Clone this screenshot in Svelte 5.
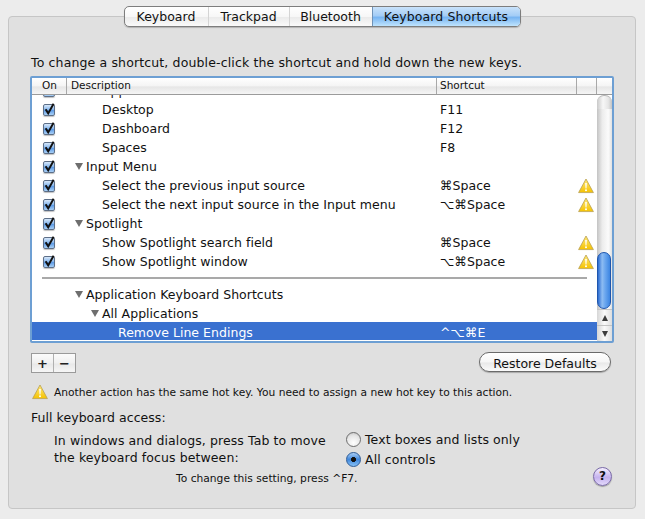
<script>
  const tabs = ['Keyboard', 'Trackpad', 'Bluetooth', 'Keyboard Shortcuts']

  const rows = [
    { label: 'Desktop', level: 2, on: true, key: 'F11' },
    { label: 'Dashboard', level: 2, on: true, key: 'F12' },
    { label: 'Spaces', level: 2, on: true, key: 'F8' },
    { label: 'Input Menu', level: 1, on: true, open: true },
    { label: 'Select the previous input source', level: 2, on: true, key: '⌘Space', warn: true },
    { label: 'Select the next input source in the Input menu', level: 2, on: true, key: '⌥⌘Space', warn: true },
    { label: 'Spotlight', level: 1, on: true, open: true },
    { label: 'Show Spotlight search field', level: 2, on: true, key: '⌘Space', warn: true },
    { label: 'Show Spotlight window', level: 2, on: true, key: '⌥⌘Space', warn: true },
    { divider: true },
    { label: 'Application Keyboard Shortcuts', level: 1, open: true },
    { label: 'All Applications', level: 2, open: true },
    { label: 'Remove Line Endings', level: 3, key: '^⌥⌘E', selected: true }
  ]
</script>

{#snippet warning(size)}
  <svg class="warn" width={size} height={size} viewBox="0 0 16 16">
    <defs>
      <linearGradient id="wg" x1="0" y1="0" x2="0" y2="1">
        <stop offset="0" stop-color="#ffe97a" />
        <stop offset="1" stop-color="#f5c200" />
      </linearGradient>
    </defs>
    <path d="M8 1 L15.4 14.6 H0.6 Z" fill="url(#wg)" stroke="#b9a050" stroke-width="0.8" stroke-linejoin="round" />
    <path d="M7.2 5 H8.8 L8.5 10.4 H7.5 Z" fill="#fff" />
    <circle cx="8" cy="12.2" r="1" fill="#fff" />
  </svg>
{/snippet}

<div class="page">
  <div class="tabs">
    {#each tabs as tab, i}
      <div class="tab" class:active={i === 3}>{tab}</div>
    {/each}
  </div>

  <div class="panel">
    <p class="intro">To change a shortcut, double-click the shortcut and hold down the new keys.</p>

    <div class="table">
      <div class="thead">
        <div class="th c-on">On</div>
        <div class="th c-desc">Description</div>
        <div class="th c-key">Shortcut</div>
        <div class="th c-warn"></div>
        <div class="th c-end"></div>
      </div>
      <div class="tbody">
        <div class="rows">
          <div class="row">
            <div class="cell-on"><span class="check"></span></div>
            <div class="cell-desc l2">Application windows</div>
            <div class="cell-key">F10</div>
          </div>
          {#each rows as row}
            {#if row.divider}
              <div class="divider"></div>
            {:else}
              <div class="row" class:selected={row.selected}>
                <div class="cell-on">
                  {#if row.on}
                    <span class="check">
                      <svg width="12" height="13" viewBox="0 0 12 13">
                        <path d="M2.6 6.2 L5.2 10.4 L10.6 0.8" fill="none" stroke="#111" stroke-width="2" />
                      </svg>
                    </span>
                  {/if}
                </div>
                <div class="cell-desc l{row.level}" class:open={row.open}>
                  {#if row.open}<span class="tri"></span>{/if}{row.label}
                </div>
                <div class="cell-key">{row.key ?? ''}</div>
                <div class="cell-warn">
                  {#if row.warn}{@render warning(16)}{/if}
                </div>
              </div>
            {/if}
          {/each}
        </div>
        <div class="scrollbar">
          <div class="cap"></div>
          <div class="track"></div>
          <div class="thumb"></div>
          <div class="arrow"><span class="up"></span></div>
          <div class="arrow"><span class="down"></span></div>
        </div>
      </div>
    </div>

    <div class="actions">
      <div class="plusminus">
        <button>+</button>
        <button>−</button>
      </div>
      <button class="restore">Restore Defaults</button>
    </div>

    <div class="notice">
      {@render warning(16)}
      <span>Another action has the same hot key. You need to assign a new hot key to this action.</span>
    </div>

    <div class="label">Full keyboard access:</div>

    <div class="focus">
      <div class="focus-text">In windows and dialogs, press Tab to move<br />the keyboard focus between:</div>
      <div class="radios">
        <div class="radio"><span class="dot"></span>Text boxes and lists only</div>
        <div class="radio"><span class="dot on"></span>All controls</div>
      </div>
    </div>

    <div class="footer">
      <span class="hint">To change this setting, press ^F7.</span>
      <span class="help">?</span>
    </div>
  </div>
</div>

<style>
  :global(body) {
    background: #ececec;
    font-family: "DejaVu Sans", sans-serif;
    color: #111;
    overflow: hidden;
  }

  .page {
    width: 645px;
    height: 519px;
    padding: 6px 9px 10px 8px;
    box-sizing: border-box;
  }

  .tabs {
    position: relative;
    z-index: 1;
    display: grid;
    grid-template-columns: 83px 81px 83px 148px;
    width: max-content;
    height: 21px;
    margin: 0 auto -11px;
    border: 1px solid #7d7d7d;
    border-radius: 5px;
    background: linear-gradient(#ffffff 0%, #f7f7f7 50%, #ebebeb 55%, #fafafa 100%);
    box-sizing: border-box;
    overflow: hidden;
    font-size: 12.5px;
    box-shadow: 0 1px 1px rgba(0, 0, 0, 0.2);
  }

  .tab {
    display: flex;
    align-items: center;
    justify-content: center;
    border-left: 1px solid #d4d4d4;
  }

  .tab:first-child {
    border-left: 0;
  }

  .tab.active {
    background: linear-gradient(#c9e2fa 0%, #a4cdf6 45%, #78b5f2 55%, #bfe4fd 100%);
    border-left-color: #6f93b8;
    letter-spacing: 0.1px;
  }

  .panel {
    height: 493px;
    padding: 38px 22px 0;
    box-sizing: border-box;
    background: #e0e0e0;
    border: 1px solid #c6c6c6;
    border-radius: 4px;
  }

  .intro {
    margin: 0 0 5px;
    font-size: 12.5px;
    line-height: 16px;
    letter-spacing: 0.14px;
  }

  .table {
    width: 584px;
    height: 267px;
    box-sizing: border-box;
    border: 2px solid #6d9fd3;
    border-radius: 2px;
    background: #fff;
    margin-left: -1px;
    display: flex;
    flex-direction: column;
    overflow: hidden;
  }

  .thead {
    display: flex;
    flex: none;
    height: 16px;
    border-bottom: 1px solid #9b9b9b;
    background: linear-gradient(#ffffff 0%, #f4f4f4 50%, #e6e6e6 55%, #f5f5f5 100%);
    font-size: 10.5px;
    line-height: 15px;
  }

  .th {
    box-sizing: border-box;
    padding-left: 3px;
    border-right: 1px solid #a8a8a8;
  }

  .c-on {
    width: 35px;
    padding-left: 10px;
  }

  .c-desc {
    width: 370px;
    padding-left: 4px;
  }

  .c-key {
    width: 140px;
  }

  .c-warn {
    width: 20px;
  }

  .c-end {
    flex: 1;
    border-right: 0;
  }

  .tbody {
    flex: 1;
    display: flex;
    min-height: 0;
  }

  .rows {
    flex: 1;
    overflow: hidden;
    font-size: 12.5px;
    letter-spacing: 0.03px;
  }

  .row {
    display: flex;
    align-items: center;
    height: 19px;
    line-height: 19px;
  }

  .row:first-child {
    margin-top: -14px;
  }

  .row.selected {
    box-sizing: border-box;
    height: 18px;
    margin-top: -1px;
    padding-top: 2px;
    background: #3a71d0;
    color: #fff;
  }

  .cell-on {
    flex: none;
    width: 35px;
    display: flex;
    padding-left: 11px;
    box-sizing: border-box;
  }

  .check {
    display: block;
    width: 12px;
    height: 12px;
    box-sizing: border-box;
    border: 1px solid #5d6f88;
    border-radius: 2px;
    background: linear-gradient(#d8e8fa 0%, #80b3ec 50%, #5f9ce6 55%, #a9d0f6 100%);
    box-shadow: 0 1px 1px rgba(0, 0, 0, 0.25);
  }

  .check svg {
    display: block;
    margin: -2px 0 0 -1px;
    overflow: visible;
  }

  .cell-desc {
    flex: none;
    width: 370px;
    box-sizing: border-box;
    white-space: nowrap;
    display: flex;
    align-items: center;
  }

  .l1 {
    padding-left: 19px;
  }

  .l2 {
    padding-left: 35px;
  }

  .l3 {
    padding-left: 51px;
  }

  .l1.open {
    padding-left: 8px;
  }

  .l2.open {
    padding-left: 24px;
  }

  .tri {
    display: block;
    width: 0;
    height: 0;
    margin: 0 3px 0 0;
    border-left: 4px solid transparent;
    border-right: 4px solid transparent;
    border-top: 7px solid #6e6e6e;
  }

  .cell-key {
    flex: none;
    width: 140px;
    padding-left: 3px;
    box-sizing: border-box;
    white-space: nowrap;
  }

  .cell-warn {
    flex: 1;
    display: flex;
    justify-content: flex-end;
    padding-right: 3px;
  }

  .warn {
    display: block;
    flex: none;
  }

  .divider {
    height: 2px;
    margin: 6px 10px;
    background: #a9a9a9;
  }

  .scrollbar {
    flex: none;
    width: 15px;
    position: relative;
    display: flex;
    flex-direction: column;
    box-sizing: border-box;
  }

  .cap {
    height: 14px;
    border-radius: 7px 7px 0 0;
    background: linear-gradient(90deg, #c9c9c9, #f7f7f7 40%, #e6e6e6 75%, #c4c4c4);
    border-top: 1px solid #b5b5b5;
    box-sizing: border-box;
  }

  .track {
    flex: 1;
    background: linear-gradient(90deg, #c3c3c3, #ececec 35%, #fbfbfb 75%, #e2e2e2);
  }

  .thumb {
    position: absolute;
    left: 0;
    right: 1px;
    top: 157px;
    height: 57px;
    box-sizing: border-box;
    border: 1px solid #1f56ad;
    border-radius: 7px;
    background: linear-gradient(90deg, #2b6bd0, #8dbcf2 35%, #6aa6ee 60%, #3c85e2);
  }

  .arrow {
    height: 16px;
    display: flex;
    align-items: center;
    justify-content: center;
    background: linear-gradient(90deg, #d6d6d6, #fafafa 50%, #dedede);
    border-top: 1px solid #c4c4c4;
    box-sizing: border-box;
  }

  .up,
  .down {
    width: 0;
    height: 0;
    border-left: 3.5px solid transparent;
    border-right: 3.5px solid transparent;
  }

  .up {
    border-bottom: 6px solid #3d3d3d;
  }

  .down {
    border-top: 6px solid #3d3d3d;
  }

  .actions {
    display: flex;
    justify-content: space-between;
    align-items: flex-start;
    height: 21px;
    margin: 9px 2px 0 0;
  }

  .plusminus {
    display: flex;
    width: 45px;
    height: 20px;
    margin-top: 1px;
    border: 1px solid #9a9a9a;
    box-sizing: border-box;
    background: linear-gradient(#fbfbfb, #f0f0f0 50%, #e8e8e8 55%, #f6f6f6);
  }

  .plusminus button {
    flex: 1;
    border: 0;
    padding: 0;
    background: none;
    font: bold 13px/17px "DejaVu Sans", sans-serif;
    color: #222;
  }

  .plusminus button + button {
    border-left: 1px solid #b0b0b0;
  }

  .restore {
    width: 132px;
    height: 20px;
    padding: 2px 0 0;
    border: 1px solid #6a6a6a;
    border-radius: 10px;
    background: linear-gradient(#ffffff, #f6f6f6 50%, #e9e9e9 55%, #fbfbfb);
    font: 12.5px "DejaVu Sans", sans-serif;
    color: #111;
    box-shadow: 0 1px 1px rgba(0, 0, 0, 0.25);
  }

  .notice {
    display: flex;
    align-items: center;
    gap: 6px;
    height: 16px;
    margin-top: 11px;
    padding-left: 1px;
    font-size: 10.7px;
  }

  .label {
    margin-top: 10px;
    font-size: 12.5px;
    line-height: 16px;
    letter-spacing: 0.05px;
  }

  .focus {
    display: flex;
    margin-top: 3px;
    padding-left: 23px;
    font-size: 12.5px;
    letter-spacing: 0.1px;
  }

  .focus-text {
    width: 292px;
    line-height: 17px;
    padding-top: 3px;
  }

  .radios {
    display: flex;
    flex-direction: column;
  }

  .radio {
    display: flex;
    align-items: center;
    gap: 4px;
    height: 20px;
  }

  .dot {
    display: block;
    width: 15px;
    height: 15px;
    box-sizing: border-box;
    border: 1px solid #6e6e6e;
    border-radius: 50%;
    background: radial-gradient(circle at 50% 75%, #ffffff, #e6e6e6 60%, #bdbdbd);
  }

  .dot.on {
    background: radial-gradient(circle, #111 0 2.2px, transparent 2.8px),
      linear-gradient(#a8cdf5, #3f87dc 50%, #86c0f5);
    border-color: #2c5b97;
  }

  .footer {
    position: relative;
    margin-top: 1px;
    padding-left: 145px;
    font-size: 10.7px;
    line-height: 18px;
  }

  .help {
    position: absolute;
    right: 1px;
    top: -3px;
    width: 19px;
    height: 19px;
    box-sizing: border-box;
    border: 1px solid #7a6aa8;
    border-radius: 50%;
    background: linear-gradient(#f5f0ff, #c5b2ee 55%, #e2d8fb);
    text-align: center;
    font: bold 12px/17px "DejaVu Sans", sans-serif;
    box-shadow: 0 1px 1px rgba(0, 0, 0, 0.3);
  }
</style>
